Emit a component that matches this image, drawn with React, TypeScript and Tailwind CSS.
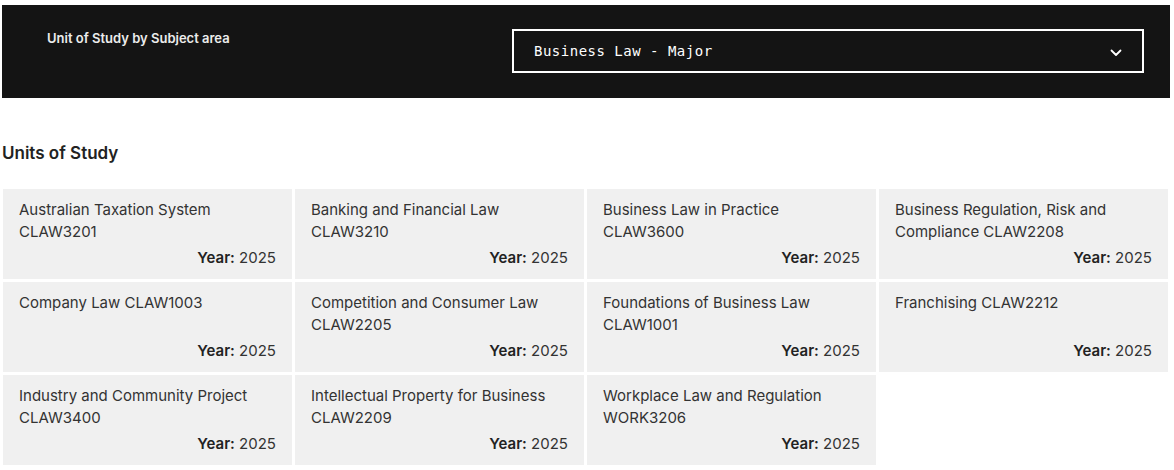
import React from "react";

type Unit = { title: string; code: string };

const units: Unit[] = [
  { title: "Australian Taxation System", code: "CLAW3201" },
  { title: "Banking and Financial Law", code: "CLAW3210" },
  { title: "Business Law in Practice", code: "CLAW3600" },
  { title: "Business Regulation, Risk and Compliance", code: "CLAW2208" },
  { title: "Company Law", code: "CLAW1003" },
  { title: "Competition and Consumer Law", code: "CLAW2205" },
  { title: "Foundations of Business Law", code: "CLAW1001" },
  { title: "Franchising", code: "CLAW2212" },
  { title: "Industry and Community Project", code: "CLAW3400" },
  { title: "Intellectual Property for Business", code: "CLAW2209" },
  { title: "Workplace Law and Regulation", code: "WORK3206" },
];

const sans = { fontFamily: "Inter, 'Noto Sans', sans-serif" };

function Chevron() {
  return (
    <svg width="12" height="8" viewBox="0 0 12 8" fill="none">
      <path d="M1.5 1.5 L6 6 L10.5 1.5" stroke="#fff" strokeWidth="1.8" strokeLinecap="round" strokeLinejoin="round" />
    </svg>
  );
}

function UnitCard({ unit }: { unit: Unit }) {
  return (
    <div className="flex h-[90px] flex-col justify-between bg-[#f0f0f0] px-4 pb-[10px] pt-[10px]">
      <p className="text-[15px] leading-[22px] text-[#333]">{`${unit.title} ${unit.code}`}</p>
      <p className="text-right text-[15px] leading-[22px] text-[#333]">
        <span className="font-semibold text-[#222]">Year:</span> 2025
      </p>
    </div>
  );
}

export default function App() {
  return (
    <div className="min-h-[470px] bg-white pl-[2px] pr-[4px] pt-[5px]" style={sans}>
      <div className="flex h-[93px] items-start justify-between bg-[#141414] pl-[45px] pr-[26px] pt-[24px]">
        <span className="text-[13px] font-semibold text-[#ececec]">Unit of Study by Subject area</span>
        <div className="flex h-[44px] w-[632px] items-center justify-between border-2 border-white pl-[20px] pr-[20px]">
          <span
            className="text-[14px] tracking-[0.5px] text-white"
            style={{ fontFamily: "'DejaVu Sans Mono', 'Liberation Mono', monospace" }}
          >
            Business Law - Major
          </span>
          <span className="mt-[3px]">
            <Chevron />
          </span>
        </div>
      </div>

      <h2 className="mt-[43px] text-[17px] font-semibold leading-[24px] text-[#222]">Units of Study</h2>

      <div className="mt-[24px] grid w-[1166px] grid-cols-4 gap-[3px] pl-[1px]">
        {units.map((u) => (
          <UnitCard key={u.code} unit={u} />
        ))}
      </div>
    </div>
  );
}
